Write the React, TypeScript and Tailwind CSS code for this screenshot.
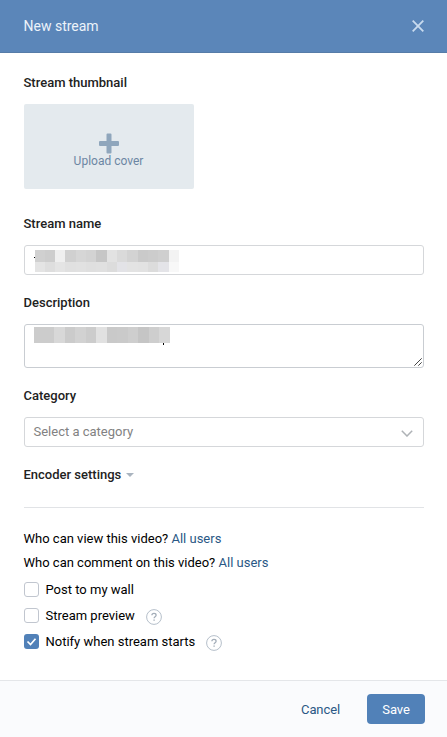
import { useState } from "react";
import type { ReactNode } from "react";

const nameTop = ["#d0d0d0", "#cdcdcd", "#efefef", "#d0d0d0", "#d6d6d6", "#d3d3d3", "#c6c6c6", "#e2e2e2", "#dadada", "#d3d3d3", "#cacaca", "#cccccc", "#cfcfcf", "#f3f3f3"];
const nameBottom = ["#e4e4e4", "#dedede", "#e4e4e4", "#e0e0e0", "#e1e1e1", "#dfdfdf", "#e0e0e0", "#dcdcdc", "#e3e3e7", "#e3e3e3", "#e2e2e2", "#dcdcdc", "#e4e4e8", "#f8f8f8"];
const descriptionCells = ["#cccccc", "#cccccc", "#d8d8d8", "#cbcbcb", "#d2d2d2", "#cccccc", "#e1e1e1", "#c9c9c9", "#cacaca", "#cecece", "#c5c5c5", "#cecece", "#d7d7d7"];

function Mosaic({ colors, className }: { colors: string[]; className: string }) {
  return (
    <div className={`flex ${className}`}>
      {colors.map((color, i) => (
        <span key={i} className="flex-1" style={{ backgroundColor: color }} />
      ))}
    </div>
  );
}

function Label({ children }: { children: ReactNode }) {
  return <div className="h-5 font-medium text-[#222]">{children}</div>;
}

function HelpIcon() {
  return (
    <svg className="mt-px ml-[11px] size-4" viewBox="0 0 16 16" fill="none">
      <circle cx="8" cy="8" r="7.4" stroke="#b5bfca" />
      <path d="M5.9 6.3c0-1.2.9-1.9 2.1-1.9s2.1.7 2.1 1.8c0 1.5-2 1.5-2 3" stroke="#a3adb8" strokeWidth="1.3" />
      <path d="M7.4 10.4h1.4v1.4H7.4z" fill="#a3adb8" />
    </svg>
  );
}

interface CheckRowProps {
  label: string;
  checked: boolean;
  onToggle: () => void;
  help?: boolean;
}

function CheckRow({ label, checked, onToggle, help }: CheckRowProps) {
  return (
    <div className="flex h-[26px] items-center">
      <button type="button" role="checkbox" aria-checked={checked} onClick={onToggle} className="flex items-center">
        {checked ? (
          <span className="mb-px flex size-[15px] items-center justify-center rounded-[3px] bg-[#5181b8]">
            <svg className="size-[15px]" viewBox="0 0 15 15" fill="none">
              <path d="m3.5 7.5 3 3 5-5.8" stroke="#fff" strokeWidth="1.7" />
            </svg>
          </span>
        ) : (
          <span className="mb-px size-[15px] rounded-[3px] border border-[#c1c6cf] bg-white" />
        )}
        <span className="ml-[7px]">{label}</span>
      </button>
      {help && <HelpIcon />}
    </div>
  );
}

export default function App() {
  const [postToWall, setPostToWall] = useState(false);
  const [preview, setPreview] = useState(false);
  const [notify, setNotify] = useState(true);

  return (
    <div className="flex h-[737px] w-[447px] flex-col bg-white font-[Roboto,sans-serif] text-[13px] leading-5 text-black">
      <header className="flex h-[53px] items-center justify-between border-b border-[#567ca8] bg-[#5b86b9] pr-[23px] pl-[23.5px] text-[14px] text-[#edf3fa]">
        <h1>New stream</h1>
        <button type="button" aria-label="Close">
          <svg className="size-3" viewBox="0 0 12 12" fill="none">
            <path d="m.7.7 10.6 10.6M11.3.7.7 11.3" stroke="#c9dbef" strokeWidth="1.8" />
          </svg>
        </button>
      </header>

      <main className="flex-1 pt-5 pr-[23px] pl-[23.5px]">
        <Label>Stream thumbnail</Label>
        <button
          type="button"
          className="mt-[11px] flex h-[85px] w-[170px] flex-col items-center rounded-[2px] bg-[#e4eaee] pt-[29px] text-[12px] leading-[14px] text-[#6c86a3]"
        >
          <svg className="h-[21px] w-5" viewBox="0 0 20 21">
            <path d="M8.5.5h3a1 1 0 0 1 1 1V8H19a1 1 0 0 1 1 1v3a1 1 0 0 1-1 1h-6.5v6.5a1 1 0 0 1-1 1h-3a1 1 0 0 1-1-1V13H1a1 1 0 0 1-1-1V9a1 1 0 0 1 1-1h6.5V1.5a1 1 0 0 1 1-1z" fill="#8fa6bc" />
          </svg>
          <span>Upload cover</span>
        </button>

        <div className="mt-[25px]">
          <Label>Stream name</Label>
          <div className="mt-[11px] flex h-[30px] rounded-[3px] border border-[#d5d7da] pt-1 pl-[9px]">
            <span className="mt-[7px] h-px w-px bg-black" />
            <div>
              <Mosaic colors={nameTop} className="h-3 w-[144.5px]" />
              <Mosaic colors={nameBottom} className="h-2.5 w-[144.5px]" />
            </div>
          </div>
        </div>

        <div className="mt-[18px]">
          <Label>Description</Label>
          <div className="mt-[11px] flex h-11 justify-between rounded-[3px] border border-[#c9cdd2] pt-0.5 pl-[9px]">
            <div>
              <Mosaic colors={descriptionCells} className="h-4 w-[136px]" />
              <span className="ml-[129px] block h-0.5 w-px bg-black" />
            </div>
            <svg className="mr-px mb-px size-2 self-end" viewBox="0 0 8 8" stroke="#444" strokeWidth="1">
              <path d="M.3 7.7 7.7.3M4.3 7.7l3.4-3.4" />
            </svg>
          </div>
        </div>

        <div className="mt-[18px]">
          <Label>Category</Label>
          <button
            type="button"
            className="mt-[11px] flex h-[30px] w-full items-center justify-between rounded-[3px] border border-[#d5d7da] pr-2.5 pl-[9px] text-[#828282]"
          >
            Select a category
            <svg className="mt-0.5 h-[7px] w-3" viewBox="0 0 12 7" fill="none">
              <path d="m.8.8 5.2 5.2L11.2.8" stroke="#aeb2b6" strokeWidth="1.5" />
            </svg>
          </button>
        </div>

        <button type="button" className="mt-[18px] flex h-5 items-center font-medium text-[#222]">
          Encoder settings
          <svg className="ml-[5px] h-1 w-2" viewBox="0 0 8 4">
            <path d="M0 0h8L4 4z" fill="#aab4bf" />
          </svg>
        </button>

        <hr className="mt-[22px] border-[#e1e3e6]" />

        <div className="mt-[19px] leading-6">
          <p>
            Who can view this video? <a className="text-[#2a5885]">All users</a>
          </p>
          <p>
            Who can comment on this video? <a className="text-[#2a5885]">All users</a>
          </p>
        </div>

        <div className="mt-0.5">
          <CheckRow label="Post to my wall" checked={postToWall} onToggle={() => setPostToWall(!postToWall)} />
          <CheckRow label="Stream preview" checked={preview} onToggle={() => setPreview(!preview)} help />
          <CheckRow label="Notify when stream starts" checked={notify} onToggle={() => setNotify(!notify)} help />
        </div>
      </main>

      <footer className="flex h-[57px] items-center justify-end gap-[27px] border-t border-[#e4e6e9] bg-[#fafbfd] pr-[22px]">
        <button type="button" className="pt-0.5 tracking-[-0.1px] text-[#2a5885]">Cancel</button>
        <button type="button" className="h-[30px] w-[58px] rounded-[4px] bg-[#5181b8] pt-0.5 tracking-[-0.1px] text-white">Save</button>
      </footer>
    </div>
  );
}
